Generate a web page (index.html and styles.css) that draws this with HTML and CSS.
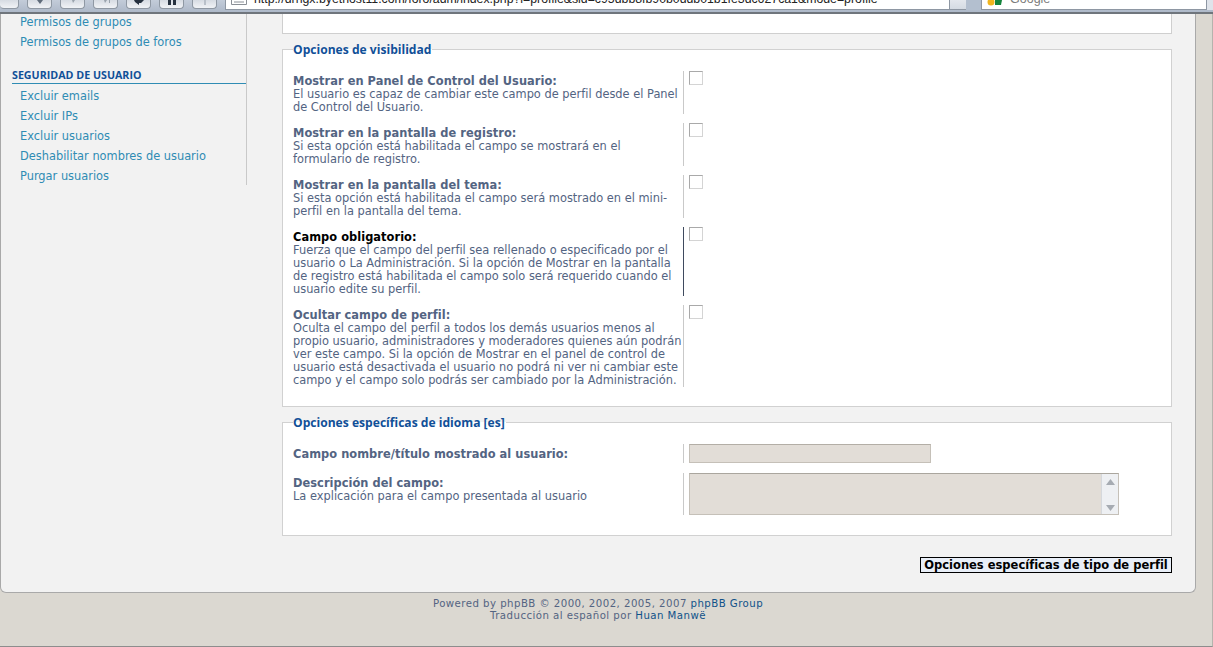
FILE: index.html
```html
<!DOCTYPE html>
<html lang="es">
<head>
<meta charset="utf-8">
<title>Opciones de perfil</title>
<link rel="stylesheet" href="styles.css">
</head>
<body>
<header class="toolbar">
  <div class="tb-btn tb-first"></div>
  <div class="tb-btn"><svg width="12" height="6" viewBox="0 0 12 6"><path d="M3 0h6L6 4z" fill="#5f6b7a"/></svg></div>
  <div class="tb-btn"><svg width="12" height="6" viewBox="0 0 12 6"><path d="M5 0h3L6 3z" fill="#9aa3ad"/></svg></div>
  <div class="tb-btn"><svg width="12" height="6" viewBox="0 0 12 6"><path d="M4 0h3L5 3zM9 0h1v3H9z" fill="#9aa3ad"/></svg></div>
  <div class="tb-btn"><svg width="14" height="6" viewBox="0 0 14 6"><path d="M2 0h10L9 3H7v2L3 2z" fill="#26313f"/></svg></div>
  <div class="tb-btn"><svg width="12" height="6" viewBox="0 0 12 6"><path d="M2 0h3v5H2zM7 0h3v5H7z" fill="#26313f"/></svg></div>
  <div class="tb-btn"><svg width="12" height="6" viewBox="0 0 12 6"><path d="M5 0h2v5H5z" fill="#b9c0c9"/></svg></div>
  <div class="address">
    <svg class="page-icon" width="16" height="6" viewBox="0 0 16 6"><path d="M.5 0v4.500h15V0M3 2h10" fill="#fff" stroke="#8a8f96"/></svg>
    <span class="url">http://drngx.byethost11.com/foro/adm/index.php?i=profile&amp;sid=c95dbb8fb90b0ddb01b1fe3dc627ca1&amp;mode=profile</span>
  </div>
  <div class="drop"></div>
  <div class="grip"></div>
  <div class="search">
    <svg width="18" height="6" viewBox="0 0 18 6"><circle cx="5" cy="2" r="3.500" fill="#f0b51e"/><path d="M9 0h7l-1 5H9z" fill="#14843c"/></svg>
    <span class="search-text">Google</span>
  </div>
  <div class="drop-end"></div>
</header>

<div class="page">
  <main class="panel">
    <nav class="sidebar">
      <ul class="menu menu-top">
        <li><a href="#">Permisos de grupos</a></li>
        <li><a href="#">Permisos de grupos de foros</a></li>
      </ul>
      <h2 class="menu-head">SEGURIDAD DE USUARIO</h2>
      <ul class="menu menu-sec">
        <li><a href="#">Excluir emails</a></li>
        <li><a href="#">Excluir IPs</a></li>
        <li><a href="#">Excluir usuarios</a></li>
        <li><a href="#">Deshabilitar nombres de usuario</a></li>
        <li><a href="#">Purgar usuarios</a></li>
      </ul>
    </nav>

    <section class="content">
      <div class="top-box"></div>

      <fieldset class="group group-vis">
        <legend>Opciones de visibilidad</legend>
        <div class="row">
          <div class="lbl"><b>Mostrar en Panel de Control del Usuario:</b><br>El usuario es capaz de cambiar este campo de perfil desde el Panel<br>de Control del Usuario.</div>
          <div class="val"><input type="checkbox" class="check"></div>
        </div>
        <div class="row">
          <div class="lbl"><b>Mostrar en la pantalla de registro:</b><br>Si esta opción está habilitada el campo se mostrará en el<br>formulario de registro.</div>
          <div class="val"><input type="checkbox" class="check"></div>
        </div>
        <div class="row">
          <div class="lbl"><b>Mostrar en la pantalla del tema:</b><br>Si esta opción está habilitada el campo será mostrado en el mini-<br>perfil en la pantalla del tema.</div>
          <div class="val"><input type="checkbox" class="check"></div>
        </div>
        <div class="row row-hover">
          <div class="lbl"><b>Campo obligatorio:</b><br>Fuerza que el campo del perfil sea rellenado o especificado por el<br>usuario o La Administración. Si la opción de Mostrar en la pantalla<br>de registro está habilitada el campo solo será requerido cuando el<br>usuario edite su perfil.</div>
          <div class="val"><input type="checkbox" class="check"></div>
        </div>
        <div class="row">
          <div class="lbl"><b>Ocultar campo de perfil:</b><br>Oculta el campo del perfil a todos los demás usuarios menos al<br>propio usuario, administradores y moderadores quienes aún podrán<br>ver este campo. Si la opción de Mostrar en el panel de control de<br>usuario está desactivada el usuario no podrá ni ver ni cambiar este<br>campo y el campo solo podrás ser cambiado por la Administración.</div>
          <div class="val"><input type="checkbox" class="check"></div>
        </div>
      </fieldset>

      <fieldset class="group group-lang">
        <legend>Opciones específicas de idioma [es]</legend>
        <div class="row row-input">
          <div class="lbl"><b>Campo nombre/título mostrado al usuario:</b></div>
          <div class="val"><input type="text" class="field"></div>
        </div>
        <div class="row row-input">
          <div class="lbl"><b>Descripción del campo:</b><br>La explicación para el campo presentada al usuario</div>
          <div class="val">
            <div class="area">
              <div class="area-fill"></div>
              <div class="area-bar">
                <svg width="9" height="6" viewBox="0 0 9 6"><path d="M4.500 0L9 6H0z" fill="#a6abb2"/></svg>
                <svg width="9" height="6" viewBox="0 0 9 6"><path d="M0 0h9L4.500 6z" fill="#a6abb2"/></svg>
              </div>
            </div>
          </div>
        </div>
      </fieldset>

      <div class="actions"><button type="button" class="submit">Opciones específicas de tipo de perfil</button></div>
    </section>
  </main>

  <footer class="foot">
    Powered by phpBB © 2000, 2002, 2005, 2007 <a href="#">phpBB Group</a><br>
    Traducción al español por <a href="#">Huan Manwë</a>
  </footer>
</div>
</body>
</html>
```

FILE: styles.css
```css
* { box-sizing: border-box; }
html, body { margin: 0; padding: 0; }
body {
  width: 1213px;
  height: 647px;
  overflow: hidden;
  background: #dbd8d1;
  font-family: "DejaVu Sans", Verdana, sans-serif;
  font-size: 11.400px;
  color: #536482;
}

/* Browser chrome, cut off at the top of the shot */
.toolbar {
  height: 14px;
  display: flex;
  align-items: flex-start;
  overflow: hidden;
  background: linear-gradient(#c3ccd9, #aeb9c9);
  border-bottom: 2px solid #6f757c;
}
.tb-btn {
  flex: none;
  width: 25px;
  height: 9px;
  margin-right: 8px;
  border: 1px solid #8f98a3;
  border-top: 0;
  border-radius: 0 0 4px 4px;
  background: linear-gradient(#d6dbe2, #f1f3f6);
  display: flex;
  justify-content: center;
}
.tb-first { width: 19px; border-left: 0; }
.address {
  flex: none;
  width: 725px;
  height: 10px;
  background: #fff;
  border: 1px solid #8e97a3;
  border-top: 0;
  display: flex;
  overflow: hidden;
}
.page-icon { flex: none; margin: 0 0 0 5px; }
.url {
  margin: -8px 0 0 7px;
  font-family: "Liberation Sans", Arial, sans-serif;
  font-size: 12.300px;
  line-height: 14px;
  color: #222;
  white-space: nowrap;
}
.drop {
  flex: none;
  width: 16px;
  height: 10px;
  background: linear-gradient(#e3e7ed, #d5dbe3);
  border-bottom: 1px solid #8e97a3;
}
.grip { flex: none; width: 15px; height: 10px; background: #b3bfcf; }
.search {
  flex: none;
  width: 226px;
  height: 10px;
  background: #fff;
  border: 1px solid #8e97a3;
  border-top: 0;
  display: flex;
  overflow: hidden;
  padding-left: 4px;
}
.search-text {
  margin: -8px 0 0 6px;
  font-family: "Liberation Sans", Arial, sans-serif;
  font-size: 12.500px;
  line-height: 14px;
  color: #7c7c7c;
}
.drop-end { flex: none; width: 6px; height: 10px; background: #dfe3ea; }

/* Page */
.page {
  height: 633px;
  border-bottom: 1px solid #8d8d8d;
  border-right: 1px solid #b5b3ad;
}
.panel {
  width: 1196px;
  height: 579px;
  display: flex;
  background: #f2f2f2;
  border: 1px solid #a9a9a9;
  border-top: 0;
  border-radius: 0 0 6px 6px;
}

/* Sidebar */
.sidebar {
  flex: none;
  width: 246px;
  height: 171px;
  border-right: 1px solid #c9c9c9;
  padding-left: 11px;
}
.menu { list-style: none; margin: 0; padding: 0; }
.menu-top { margin-top: -2px; }
.menu-sec { margin-top: 2px; }
.menu li { height: 20px; line-height: 20px; padding-left: 8px; }
.menu a { color: #2f8cb4; text-decoration: none; white-space: nowrap; }
.menu-head {
  margin: 15px 0 0;
  height: 17px;
  line-height: 17px;
  border-bottom: 1px solid #2f8cb4;
  font-family: "Open Sans", sans-serif;
  font-size: 10.700px;
  font-weight: 700;
  color: #115098;
}

/* Content */
.content { flex: none; width: 890px; margin-left: 35px; }
.top-box {
  height: 20px;
  background: #fff;
  border: 1px solid #cfcfcf;
  border-top: 0;
}
.group {
  margin: 0;
  padding: 0 0 0 10px;
  background: #fff;
  border: 1px solid #d1d1d1;
  min-width: 0;
}
.group legend {
  margin-left: 0;
  padding: 0 1px 0 0;
  font-family: "Open Sans", sans-serif;
  font-size: 12.100px;
  font-weight: 700;
  line-height: 13px;
  color: #115098;
}
.group-vis { margin-top: 9px; height: 364px; padding-top: 15px; }
.group-lang { margin-top: 9px; height: 120px; padding-top: 15px; }

.row { display: flex; margin-bottom: 9px; }
.lbl {
  flex: none;
  width: 390px;
  padding-top: 4px;
  line-height: 13px;
  white-space: nowrap;
}
.lbl b { font-weight: 700; letter-spacing: .05px; }
.val { border-left: 1px solid #c9c9c9; padding-left: 5px; }
.row-hover b { color: #000; }
.row-hover .val { border-left-color: #3f4a5e; }
.row-input { margin-bottom: 10px; }

.check {
  appearance: none;
  display: block;
  width: 14px;
  height: 14px;
  margin: 0;
  background: #fff;
  border: 1px solid #d4d4d4;
  border-top-color: #a9a9a9;
  border-left-color: #a9a9a9;
}
.field {
  display: block;
  width: 242px;
  height: 19px;
  margin: 0;
  background: #e2ddd7;
  border: 1px solid #c5c0b8;
  border-top-color: #b3aea6;
}
.area {
  display: flex;
  width: 430px;
  height: 42px;
  background: #e2ddd7;
  border: 1px solid #c5c0b8;
  border-top-color: #aaa69e;
}
.area-fill { flex: 1; }
.area-bar {
  flex: none;
  width: 17px;
  padding: 5px 0 3px;
  background: #eef0f3;
  border-left: 1px solid #d5d8dc;
  display: flex;
  flex-direction: column;
  align-items: center;
  justify-content: space-between;
}

.actions { display: flex; justify-content: flex-end; margin-top: 21px; }
.submit {
  width: 252px;
  height: 16px;
  padding: 0;
  margin: 0;
  background: #e9eff8;
  border: 1px solid #000;
  font-family: "DejaVu Sans", Verdana, sans-serif;
  font-size: 11.500px;
  font-weight: 700;
  line-height: 14px;
  color: #000;
  white-space: nowrap;
}

.foot {
  width: 1196px;
  padding-top: 5px;
  text-align: center;
  font-size: 10.200px;
  letter-spacing: .45px;
  line-height: 12px;
  color: #536482;
}
.foot a { color: #105289; text-decoration: none; }
```
